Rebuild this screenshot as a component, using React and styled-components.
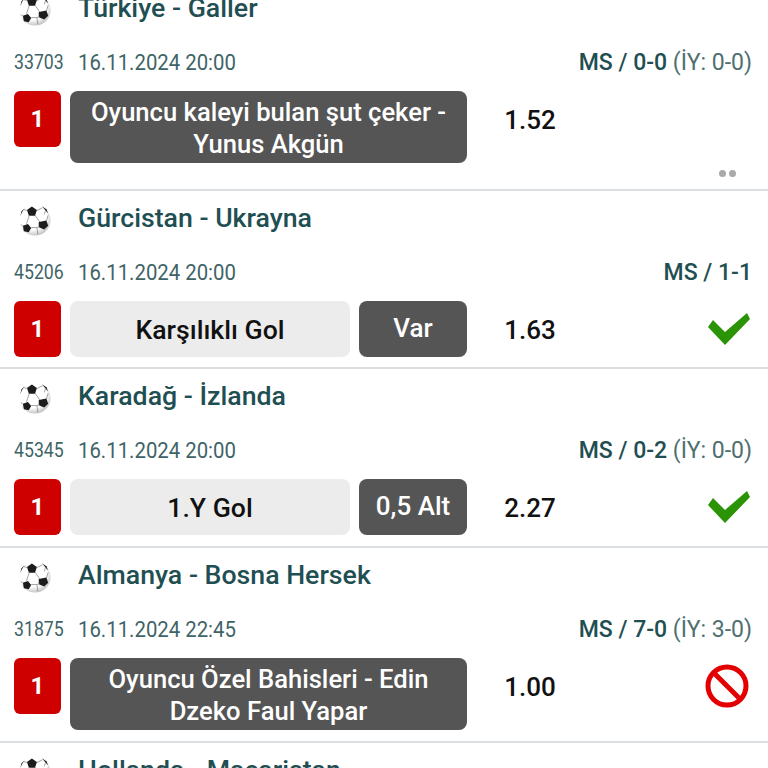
import React from 'react';
import styled, { createGlobalStyle } from 'styled-components';

const Global = createGlobalStyle`
    html, body {
        margin: 0;
        padding: 0;
        background: #fff;
        font-family: Roboto, "Liberation Sans", sans-serif;
    }
`

const Page = styled.div`
    width: 768px;
    height: 768px;
    overflow: hidden;
    background: #fff;
`

const List = styled.div`
    margin-top: -19px;
`

const Card = styled.div`
    height: ${p => p.h}px;
    box-sizing: border-box;
    padding: 9px 16px 0 14px;
    border-bottom: 2px solid #dcdfe1;
    display: flex;
    flex-direction: column;
    position: relative;
`

const Head = styled.div`
    display: flex;
    align-items: center;
    height: 36px;
    padding-left: 4px;
    svg {
        margin-top: 4px;
    }
`

const Title = styled.div`
    margin-left: 26px;
    font-size: 26.7px;
    font-weight: 500;
    color: #1f4f52;
    white-space: nowrap;
`

const Meta = styled.div`
    display: flex;
    align-items: center;
    height: 28px;
    margin-top: 22px;
    color: #3f6467;
    font-size: 21.5px;
`

const Code = styled.span`
    width: 64px;
    font-size: 20px;
    transform: scaleX(0.885);
    transform-origin: left center;
`

const When = styled.span`
    transform: scaleX(0.946);
    transform-origin: left center;
    white-space: nowrap;
`

const Score = styled.div`
    margin-left: auto;
    color: #1f4f52;
    font-weight: 500;
    font-size: 23px;
    white-space: nowrap;
    span {
        font-weight: 400;
        color: #4f6f71;
    }
`

const Row = styled.div`
    display: flex;
    align-items: flex-start;
    margin-top: 15px;
`

const Num = styled.div`
    width: 47px;
    height: 56px;
    flex: none;
    border-radius: 6px;
    background: #cf0000;
    color: #fff;
    font-weight: 700;
    font-size: 24px;
    display: flex;
    align-items: center;
    justify-content: center;
`

const Bets = styled.div`
    width: 397px;
    margin-left: 9px;
    display: flex;
    gap: 9px;
    flex: none;
`

const Pill = styled.div`
    flex: 1;
    min-height: 56px;
    box-sizing: border-box;
    border-radius: 8px;
    background: ${p => (p.dark ? '#555' : '#ececec')};
    color: ${p => (p.dark ? '#fff' : '#111')};
    font-size: ${p => (p.dark ? '25.6px' : '26.6px')};
    font-weight: 500;
    line-height: 32px;
    padding: 5px 10px 3px;
    text-align: center;
    display: flex;
    align-items: center;
    justify-content: center;
`

const Value = styled(Pill)`
    flex: none;
    width: 108px;
    font-size: 26px;
    padding: 3px 0 5px;
`

const Odds = styled.div`
    width: 126px;
    height: 58px;
    line-height: 58px;
    text-align: center;
    font-size: 26px;
    font-weight: 500;
    color: #111;
    flex: none;
`

const Status = styled.div`
    flex: 1;
    height: 56px;
    margin-right: 1px;
    display: flex;
    align-items: center;
    justify-content: flex-end;
`

const BanIcon = styled.svg`
    margin-right: 2px;
`

const Dots = styled.div`
    position: absolute;
    right: 32px;
    bottom: 12px;
    display: flex;
    gap: 3px;
    i {
        width: 7px;
        height: 7px;
        border-radius: 50%;
        background: #a9a9a9;
    }
`

const Ball = ({ id }) => (
    <svg width="34" height="34" viewBox="0 0 36 36">
        <defs>
            <radialGradient id={id} cx="42%" cy="35%" r="68%">
                <stop offset="68%" stopColor="#fff" />
                <stop offset="100%" stopColor="#bdbdbd" />
            </radialGradient>
        </defs>
        <circle cx="18" cy="18" r="16.500" fill={`url(#${id})`} />
        <path d="M14.700 3.800L20 7.500 18 13.500 11.500 13.500 9.500 7.500Z" fill="#1c1c1c" />
        <path d="M30 18.500L32 24 27.800 28 22 25.800 22 20Z" fill="#1c1c1c" />
        <path d="M5.200 24L10.500 22.200 14 26.500 11.300 31 6.200 29.800Z" fill="#1c1c1c" />
        <path d="M25.500 3.500L30 6.500 32 11 29.500 8.500Z" fill="#1c1c1c" />
        <path d="M7 5.500L4 10 2.500 14 3.500 9Z" fill="#1c1c1c" />
        <path d="M18 13l5 7M12 13l-3 9M20 8l6-3M10 8L6 7M14 26h6l3-1M20 26l1 7M5 24l-2-1M30 19l2-6M29 8l-1 4" stroke="#777" strokeWidth=".7" fill="none" />
    </svg>
)

const Check = () => (
    <svg width="44" height="34" viewBox="0 0 44 34">
        <path d="M1 15L6 8 18 20 40 1 43 7 18 33Z" fill="#2a9306" />
    </svg>
)

const Ban = () => (
    <BanIcon width="44" height="44" viewBox="0 0 44 44">
        <circle cx="22" cy="22" r="19" fill="none" stroke="#e30000" strokeWidth="5" />
        <path d="M9 9l26 26" stroke="#e30000" strokeWidth="5" />
    </BanIcon>
)

const matches = [
    { h: 210, title: 'Türkiye - Galler', code: '33703', date: '16.11.2024 20:00', ms: '0-0', iy: '0-0', bet: 'Oyuncu kaleyi bulan şut çeker - Yunus Akgün', odds: '1.52', dots: true },
    { h: 178, title: 'Gürcistan - Ukrayna', code: '45206', date: '16.11.2024 20:00', ms: '1-1', bet: 'Karşılıklı Gol', value: 'Var', odds: '1.63', status: 'ok' },
    { h: 179, title: 'Karadağ - İzlanda', code: '45345', date: '16.11.2024 20:00', ms: '0-2', iy: '0-0', bet: '1.Y Gol', value: '0,5 Alt', odds: '2.27', status: 'ok' },
    { h: 195, title: 'Almanya - Bosna Hersek', code: '31875', date: '16.11.2024 22:45', ms: '7-0', iy: '3-0', bet: 'Oyuncu Özel Bahisleri - Edin Dzeko Faul Yapar', odds: '1.00', status: 'no' },
    { h: 178, title: 'Hollanda - Macaristan' },
]

const App = () => (
    <Page>
        <Global />
        <List>
            {matches.map((m, i) => (
                <Card key={i} h={m.h}>
                    <Head>
                        <Ball id={`ball${i}`} />
                        <Title>{m.title}</Title>
                    </Head>
                    {m.code && (
                        <>
                            <Meta>
                                <Code>{m.code}</Code>
                                <When>{m.date}</When>
                                <Score>MS / {m.ms}{m.iy && <span> (İY: {m.iy})</span>}</Score>
                            </Meta>
                            <Row>
                                <Num>1</Num>
                                <Bets>
                                    <Pill dark={!m.value}>{m.bet}</Pill>
                                    {m.value && <Value dark>{m.value}</Value>}
                                </Bets>
                                <Odds>{m.odds}</Odds>
                                <Status>
                                    {m.status === 'ok' && <Check />}
                                    {m.status === 'no' && <Ban />}
                                </Status>
                            </Row>
                        </>
                    )}
                    {m.dots && <Dots><i /><i /></Dots>}
                </Card>
            ))}
        </List>
    </Page>
)

export default App
